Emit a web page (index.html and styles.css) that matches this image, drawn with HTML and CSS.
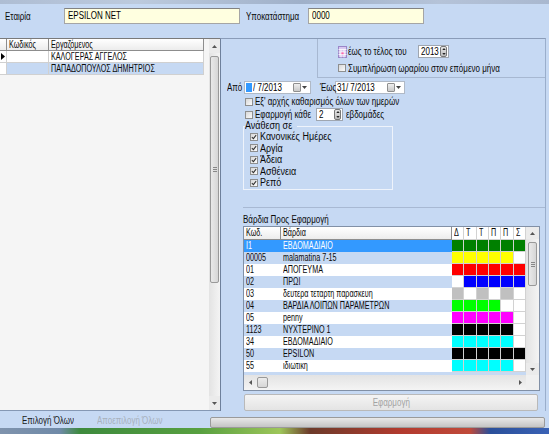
FILE: index.html
```html
<!DOCTYPE html>
<html>
<head>
<meta charset="utf-8">
<link rel="stylesheet" href="styles.css">
</head>
<body>
<div class="frame-top"></div>
<div class="header">
  <span class="lbl lbl-company"><span class="t">Εταιρία</span></span>
  <div class="field field-company"><span class="t">EPSILON NET</span></div>
  <span class="lbl lbl-branch"><span class="t">Υποκατάστημα</span></span>
  <div class="field field-branch"><span class="t">0000</span></div>
</div>
<div class="main">
  <div class="left">
    <div class="lgrid">
      <div class="lrow lhead"><div class="cell rh"></div><div class="cell c-code"><span class="g">Κωδικός</span></div><div class="cell c-name"><span class="g">Εργαζόμενος</span></div></div>
      <div class="lrow"><div class="cell rh"><svg width="4" height="7" viewBox="0 0 4 7"><path d="M0 0 L4 3.5 L0 7Z" fill="#000"/></svg></div><div class="cell c-code"></div><div class="cell c-name"><span class="g">ΚΑΛΟΓΕΡΑΣ ΑΓΓΕΛΟΣ</span></div></div>
      <div class="lrow alt"><div class="cell rh"></div><div class="cell c-code"></div><div class="cell c-name"><span class="g">ΠΑΠΑΔΟΠΟΥΛΟΣ ΔΗΜΗΤΡΙΟΣ</span></div></div>
    </div>
    <div class="vscroll lv">
      <div class="sb-btn"><svg width="5" height="3" viewBox="0 0 5 3"><path d="M0 3 L2.5 0 L5 3Z" fill="#555"/></svg></div>
      <div class="sb-track"><div class="sb-thumb lv-thumb"><span class="grip"></span></div></div>
      <div class="sb-btn"><svg width="5" height="3" viewBox="0 0 5 3"><path d="M0 0 L2.5 3 L5 0Z" fill="#555"/></svg></div>
    </div>
  </div>
  <div class="right">
    <div class="range">
      <div class="until">
        <svg class="cal-ico" width="9" height="12" viewBox="0 0 9 12">
          <rect x="0.5" y="0.5" width="8" height="11" fill="#d9c8f0" stroke="#9a86c8"/>
          <path d="M0.5 3.5 H8.5 M0.5 6 H8.5 M0.5 8.5 H8.5 M3 3.5 V11.5 M6 3.5 V11.5" stroke="#fff" stroke-width="0.8"/>
          <rect x="3.4" y="6.4" width="2.2" height="1.8" fill="#ff66aa"/>
        </svg>
        <span class="until-txt"><span class="t">έως το τέλος του</span></span>
        <div class="spin spin-year"><span class="spin-val"><span class="t">2013</span></span><span class="spin-btn"><svg width="5" height="3" viewBox="0 0 5 3"><path d="M0 3 L2.5 0 L5 3Z" fill="#222"/></svg><svg width="5" height="3" viewBox="0 0 5 3"><path d="M0 0 L2.5 3 L5 0Z" fill="#222"/></svg></span></div>
      </div>
      <div class="chk chk-fill"><span class="box"></span><span class="t">Συμπλήρωση ωραρίου στον επόμενο μήνα</span></div>
    </div>
    <div class="dates">
      <span class="dlbl"><span class="t">Από</span></span>
      <div class="date date-from"><span class="dsel">1</span><span class="dtxt"><span class="t">/ 7/2013</span></span><span class="dd"><span class="dd-cal"></span><svg width="5" height="3" viewBox="0 0 5 3"><path d="M0 0 L2.5 3 L5 0Z" fill="#444"/></svg></span></div>
      <span class="dlbl dlbl-to"><span class="t">Έως</span></span>
      <div class="date date-to"><span class="dtxt"><span class="t">31/ 7/2013</span></span><span class="dd"><span class="dd-cal"></span><svg width="5" height="3" viewBox="0 0 5 3"><path d="M0 0 L2.5 3 L5 0Z" fill="#444"/></svg></span></div>
    </div>
    <div class="chk chk-clear"><span class="box"></span><span class="t">Εξ' αρχής καθαρισμός όλων των ημερών</span></div>
    <div class="every">
      <div class="chk every-lbl"><span class="box"></span><span class="t">Εφαρμογή κάθε</span></div>
      <div class="spin spin-weeks"><span class="spin-val"><span class="t">2</span></span><span class="spin-btn"><svg width="5" height="3" viewBox="0 0 5 3"><path d="M0 3 L2.5 0 L5 3Z" fill="#222"/></svg><svg width="5" height="3" viewBox="0 0 5 3"><path d="M0 0 L2.5 3 L5 0Z" fill="#222"/></svg></span></div>
      <span class="weeks-txt"><span class="t">εβδομάδες</span></span>
    </div>
    <fieldset class="assign">
      <legend><span class="t f">Ανάθεση σε</span></legend>
      <div class="chk on"><span class="box"><svg width="7" height="7" viewBox="0 0 7 7"><path d="M1 3.6 L2.8 5.4 L6 1.3" fill="none" stroke="#333" stroke-width="1.2"/></svg></span><span class="t f">Κανονικές Ημέρες</span></div>
      <div class="chk on"><span class="box"><svg width="7" height="7" viewBox="0 0 7 7"><path d="M1 3.6 L2.8 5.4 L6 1.3" fill="none" stroke="#333" stroke-width="1.2"/></svg></span><span class="t f">Αργία</span></div>
      <div class="chk on"><span class="box"><svg width="7" height="7" viewBox="0 0 7 7"><path d="M1 3.6 L2.8 5.4 L6 1.3" fill="none" stroke="#333" stroke-width="1.2"/></svg></span><span class="t f">Άδεια</span></div>
      <div class="chk on"><span class="box"><svg width="7" height="7" viewBox="0 0 7 7"><path d="M1 3.6 L2.8 5.4 L6 1.3" fill="none" stroke="#333" stroke-width="1.2"/></svg></span><span class="t f">Ασθένεια</span></div>
      <div class="chk on"><span class="box"><svg width="7" height="7" viewBox="0 0 7 7"><path d="M1 3.6 L2.8 5.4 L6 1.3" fill="none" stroke="#333" stroke-width="1.2"/></svg></span><span class="t f">Ρεπό</span></div>
    </fieldset>
    <div class="sep"></div>
    <div class="shifts-lbl"><span class="t">Βάρδια Προς Εφαρμογή</span></div>
    <div class="sgrid">
      <div class="sg-body">
        <div class="srow shead"><div class="sc s-code"><span class="g">Κωδ.</span></div><div class="sc s-name"><span class="g">Βάρδια</span></div><div class="sc d"><span class="g">Δ</span></div><div class="sc d"><span class="g">Τ</span></div><div class="sc d"><span class="g">Τ</span></div><div class="sc d"><span class="g">Π</span></div><div class="sc d"><span class="g">Π</span></div><div class="sc d"><span class="g">Σ</span></div></div>
        <div class="srow sel"><div class="sc s-code"><span class="g">I1</span></div><div class="sc s-name"><span class="g">ΕΒΔΟΜΑΔΙΑΙΟ</span></div><div class="sc d c-dg"></div><div class="sc d c-dg"></div><div class="sc d c-dg"></div><div class="sc d c-dg"></div><div class="sc d c-dg"></div><div class="sc d c-dg"></div></div>
        <div class="srow alt"><div class="sc s-code"><span class="g">00005</span></div><div class="sc s-name"><span class="g">malamatina 7-15</span></div><div class="sc d c-y"></div><div class="sc d c-y"></div><div class="sc d c-y"></div><div class="sc d c-y"></div><div class="sc d c-y"></div><div class="sc d"></div></div>
        <div class="srow"><div class="sc s-code"><span class="g">01</span></div><div class="sc s-name"><span class="g">ΑΠΟΓΕΥΜΑ</span></div><div class="sc d c-r"></div><div class="sc d c-r"></div><div class="sc d c-r"></div><div class="sc d c-r"></div><div class="sc d c-r"></div><div class="sc d c-r"></div></div>
        <div class="srow alt"><div class="sc s-code"><span class="g">02</span></div><div class="sc s-name"><span class="g">ΠΡΩΙ</span></div><div class="sc d"></div><div class="sc d c-b"></div><div class="sc d c-b"></div><div class="sc d c-b"></div><div class="sc d c-b"></div><div class="sc d c-b"></div></div>
        <div class="srow"><div class="sc s-code"><span class="g">03</span></div><div class="sc s-name"><span class="g">δευτερα τεταρτη παρασκευη</span></div><div class="sc d c-gr"></div><div class="sc d"></div><div class="sc d c-gr"></div><div class="sc d"></div><div class="sc d c-gr"></div><div class="sc d"></div></div>
        <div class="srow alt"><div class="sc s-code"><span class="g">04</span></div><div class="sc s-name"><span class="g">ΒΑΡΔΙΑ ΛΟΙΠΩΝ ΠΑΡΑΜΕΤΡΩΝ</span></div><div class="sc d c-lg"></div><div class="sc d c-lg"></div><div class="sc d c-lg"></div><div class="sc d c-lg"></div><div class="sc d"></div><div class="sc d"></div></div>
        <div class="srow"><div class="sc s-code"><span class="g">05</span></div><div class="sc s-name"><span class="g">penny</span></div><div class="sc d c-m"></div><div class="sc d c-m"></div><div class="sc d c-m"></div><div class="sc d c-m"></div><div class="sc d c-m"></div><div class="sc d"></div></div>
        <div class="srow alt"><div class="sc s-code"><span class="g">1123</span></div><div class="sc s-name"><span class="g">ΝΥΧΤΕΡΙΝΟ 1</span></div><div class="sc d c-k"></div><div class="sc d c-k"></div><div class="sc d c-k"></div><div class="sc d c-k"></div><div class="sc d c-k"></div><div class="sc d"></div></div>
        <div class="srow"><div class="sc s-code"><span class="g">34</span></div><div class="sc s-name"><span class="g">ΕΒΔΟΜΑΔΙΑΙΟ</span></div><div class="sc d c-c"></div><div class="sc d c-c"></div><div class="sc d c-c"></div><div class="sc d c-c"></div><div class="sc d c-c"></div><div class="sc d"></div></div>
        <div class="srow alt"><div class="sc s-code"><span class="g">50</span></div><div class="sc s-name"><span class="g">EPSILON</span></div><div class="sc d c-k"></div><div class="sc d c-k"></div><div class="sc d c-k"></div><div class="sc d c-k"></div><div class="sc d c-k"></div><div class="sc d c-k"></div></div>
        <div class="srow"><div class="sc s-code"><span class="g">55</span></div><div class="sc s-name"><span class="g">ιδιωτικη</span></div><div class="sc d c-c"></div><div class="sc d c-c"></div><div class="sc d c-c"></div><div class="sc d c-c"></div><div class="sc d c-c"></div><div class="sc d"></div></div>
      </div>
      <div class="vscroll sv">
        <div class="sb-btn sbs"><svg width="5" height="3" viewBox="0 0 5 3"><path d="M0 3 L2.5 0 L5 3Z" fill="#555"/></svg></div>
        <div class="sb-track"><div class="sb-thumb sv-thumb"><span class="grip"></span></div></div>
        <div class="sb-btn sbs"><svg width="5" height="3" viewBox="0 0 5 3"><path d="M0 0 L2.5 3 L5 0Z" fill="#555"/></svg></div>
      </div>
      <div class="hscroll">
        <div class="hb-btn"><svg width="3" height="5" viewBox="0 0 3 5"><path d="M3 0 L0 2.5 L3 5Z" fill="#555"/></svg></div>
        <div class="hb-track"><div class="hb-thumb"></div></div>
        <div class="hb-btn"><svg width="3" height="5" viewBox="0 0 3 5"><path d="M0 0 L3 2.5 L0 5Z" fill="#555"/></svg></div>
      </div>
      <div class="corner"></div>
    </div>
    <div class="apply"><span class="t tc">Εφαρμογή</span></div>
  </div>
</div>
<div class="bottom">
  <div class="btns"><span class="lnk"><span class="t">Επιλογή Όλων</span></span><span class="lnk off"><span class="t">Αποεπιλογή Όλων</span></span></div>
  <div class="statusbar"></div>
</div>
<div class="taskbar"></div>
</body>
</html>
```

FILE: styles.css
```css
* { box-sizing: border-box; margin: 0; padding: 0; }
html, body { width: 549px; height: 434px; overflow: hidden; }
body {
  background: #c6d9f3;
  font-family: "Liberation Sans", Arial, sans-serif;
  font-size: 10px;
  color: #0a0a0a;
  display: flex;
  flex-direction: column;
}
svg { display: block; }

/* horizontally condensed text, as in the reference */
.t, .g { display: inline-block; white-space: nowrap; transform-origin: 0 50%; }
.t { transform: scaleX(0.8); }
.t.f { transform: scaleX(0.9); }
.t.tc { transform-origin: 50% 50%; }
.g { transform: scaleX(0.72); }

.frame-top { height: 4px; flex: none; background: linear-gradient(90deg, #aebdd3, #bccadd 25%, #9fb0c9 55%, #b5c3d8 80%, #a9b8cf); }

.header { height: 34px; flex: none; display: flex; align-items: flex-start; padding: 4px 0 0 5px; }
.lbl { height: 16px; line-height: 18px; }
.lbl-company { width: 59px; }
.lbl-branch { width: 62px; margin-left: 6px; }
.field { height: 16px; line-height: 14px; padding-left: 3px; color: #000; background: #ffffe0; border: 1px solid #a5a5a5; border-top-color: #828282; overflow: hidden; }
.field-company { width: 176px; }
.field-branch { width: 116px; }

.main { height: 373px; flex: none; display: flex; }

/* left grid */
.left { width: 220px; flex: none; display: flex; border-bottom: 1px solid #8598b4; }
.lgrid { flex: 1; background: #f5f5f5; border-top: 1px solid #7a7a7a; }
.lrow { display: flex; height: 12px; line-height: 11px; }
.lrow .cell { height: 12px; background: #fff; border-right: 1px solid #d0d0d0; border-bottom: 1px solid #d0d0d0; padding-left: 2px; white-space: nowrap; overflow: hidden; }
.lrow.alt .cell { background: #c6d9f3; }
.lrow.alt .cell.rh { background: #fff; }
.lrow.lhead .cell { background: linear-gradient(#ffffff, #ececec); border-right-color: #8d8d8d; border-bottom-color: #8d8d8d; }
.cell.rh { width: 7px; padding: 2px 0 0 1px; }
.c-code { width: 42px; }
.c-name { width: 155px; }

/* scrollbars */
.vscroll { display: flex; flex-direction: column; background: #ebebeb; }
.lv { width: 11px; border-top: 1px solid #7a7a7a; }
.sb-btn { height: 14px; flex: none; display: flex; align-items: center; justify-content: center; }
.sb-track { flex: 1; background: linear-gradient(90deg, #e3e3e3, #f4f4f4); }
.sb-thumb { margin: 0 auto; width: 9px; border: 1px solid #999; border-radius: 2px; background: linear-gradient(90deg, #e9e9e9, #d6d6d6); display: flex; align-items: center; justify-content: center; }
.grip { width: 4px; height: 5px; border-top: 1px solid #888; border-bottom: 1px solid #888; position: relative; }
.grip::after { content: ""; position: absolute; left: 0; right: 0; top: 1px; height: 1px; background: #888; }
.lv-thumb { margin-top: 3px; height: 227px; }

/* right panel */
.right { flex: 1; margin-right: 3px; border-left: 1px solid #6e809b; border-top: 1px solid #8a9cb8; border-right: 1px solid #9aaecb; display: flex; flex-direction: column; }
.range { margin-left: 96px; height: 39px; border-left: 1px solid #a7b8d1; border-bottom: 1px solid #a7b8d1; padding: 6px 0 0 20px; }
.until { display: flex; align-items: center; height: 13px; }
.until-txt { margin-left: 1px; width: 64px; }
.spin { display: flex; align-items: center; height: 13px; background: #fff; border: 1px solid #9fa6b0; }
.spin-val { flex: 1; padding-left: 2px; line-height: 11px; color: #000; overflow: hidden; }
.spin-btn { width: 7px; height: 11px; margin-right: 1px; flex: none; border: 1px solid #777; border-radius: 2px; background: linear-gradient(#e6e6e6, #bdbdbd); display: flex; flex-direction: column; align-items: center; justify-content: space-around; }
.spin-btn svg { width: 4px; height: 2px; }
.spin-year { width: 31px; margin-left: 6px; }
.chk { display: flex; align-items: center; height: 10px; white-space: nowrap; }
.box { width: 8px; height: 8px; flex: none; margin-right: 2px; border: 1px solid #8e8f8f; background: linear-gradient(135deg, #d8d8d8, #fbfbfb); display: flex; align-items: center; justify-content: center; }
.box svg { width: 6px; height: 6px; }
.chk-fill { margin-top: 5px; }

.dates { display: flex; align-items: center; height: 14px; margin-top: 2px; padding-left: 6px; }
.dlbl { width: 17px; }
.dlbl-to { margin-left: 9px; width: 15px; }
.date { display: flex; align-items: center; height: 13px; background: #fff; border: 1px solid #b0b9c6; color: #000; }
.date-from { width: 67px; }
.date-to { width: 70px; }
.dsel { width: 6px; height: 9px; margin-left: 1px; background: #3399ff; color: #3399ff; overflow: hidden; line-height: 9px; }
.dtxt { padding-left: 1px; width: 36px; }
.date-to .dtxt { width: 40px; }
.dd { margin-left: auto; margin-right: 3px; display: flex; align-items: center; gap: 1px; }
.dd-cal { width: 8px; height: 9px; border: 1px solid #8f8f8f; border-radius: 1px; background: linear-gradient(#efefef, #c9c9c9); }

.chk-clear { margin-top: 3px; margin-left: 24px; height: 9px; }
.every { display: flex; align-items: center; height: 13px; margin-top: 2px; margin-left: 24px; }
.every-lbl { width: 66px; }
.spin-weeks { width: 27px; margin-left: 5px; }
.weeks-txt { margin-left: 3px; }

.assign { margin: 0 0 0 22px; width: 150px; height: 69px; border: 1px solid #eef3fb; padding: 0 0 0 1px; }
.assign legend { padding: 0; line-height: 10px; height: 10px; }
.assign .chk { height: 11.5px; margin-left: 5px; }

.sep { margin: 17px 0 0 22px; height: 1px; background: #a8b9d3; }
.shifts-lbl { margin: 6px 0 0 22px; height: 11px; line-height: 11px; }

.sgrid { margin: 1px 0 0 22px; width: 297px; height: 165px; border: 1px solid #8190a6; display: grid; grid-template-columns: 282px 13px; grid-template-rows: 148px 15px; background: #c6d9f3; }
.sg-body { overflow: hidden; }
.srow { display: grid; grid-template-columns: 37px 171px repeat(6, 1fr); height: 12px; line-height: 11px; background: #fff; }
.srow.alt { background: #c6d9f3; }
.sc { height: 12px; padding-left: 2px; white-space: nowrap; overflow: hidden; }
.srow.shead { height: 13px; }
.shead .sc { height: 13px; line-height: 12px; background: linear-gradient(#ffffff, #ececec); border-right: 1px solid #8d8d8d; border-bottom: 1px solid #8d8d8d; }
.sc.d { background: #fff; border-right: 1px solid #d2d2d2; border-bottom: 1px solid #d2d2d2; }
.srow.sel .s-code, .srow.sel .s-name { background: #3399ff; color: #fff; }
.c-dg { background: #008000 !important; }
.c-y { background: #ffff00 !important; }
.c-r { background: #ff0000 !important; }
.c-b { background: #0000ff !important; }
.c-gr { background: #c0c0c0 !important; }
.c-lg { background: #00ff00 !important; }
.c-m { background: #ff00ff !important; }
.c-k { background: #000000 !important; }
.c-c { background: #00ffff !important; }

.sv { width: 13px; }
.sbs { height: 12px; }
.sv-thumb { margin-top: 3px; height: 44px; }
.hscroll { display: flex; height: 15px; background: linear-gradient(#e3e3e3, #f4f4f4); }
.hb-btn { width: 12px; flex: none; display: flex; align-items: center; justify-content: center; }
.hb-track { flex: 1; display: flex; align-items: center; }
.hb-thumb { margin-left: 1px; width: 11px; height: 11px; border: 1px solid #999; border-radius: 2px; background: linear-gradient(#ececec, #d6d6d6); }
.corner { background: #f0f0f0; }

.apply { margin: 3px 0 0 23px; width: 294px; height: 17px; line-height: 15px; text-align: center; color: #a3a3a3; border: 1px solid #b9b9b9; border-radius: 2px; background: linear-gradient(#f4f4f4, #e4e4e4); }

.bottom { height: 17px; flex: none; display: flex; }
.btns { width: 210px; display: flex; align-items: center; padding-left: 22px; padding-top: 2px; }
.lnk { color: #1b1b1b; width: 75px; }
.lnk.off { color: #a8b1bd; width: auto; }
.statusbar { width: 335px; margin-top: 6px; height: 11px; border: 1px solid #9a9a9a; border-radius: 2px; background: linear-gradient(#e8e8e8, #c4c4c4); }

.taskbar { height: 6px; flex: none; background: linear-gradient(90deg, #7f93ad 0, #6f8aa8 60px, #3d8a3d 80px, #58a040 200px, #9ec65a 280px, #6c3a2a 310px, #b23a2e 400px, #c04a3a 470px, #2a4f9a 490px, #3a62b5 549px); }
```
